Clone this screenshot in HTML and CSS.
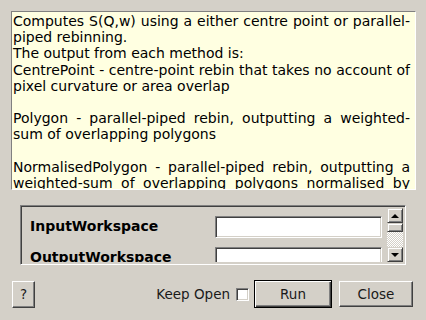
FILE: index.html
```html
<!DOCTYPE html>
<html lang="en">
<head>
    <meta charset="UTF-8">
    <title>Algorithm Dialog</title>
    <link rel="stylesheet" href="styles.css">
</head>
<body>
    <div class="dialog">
        <div class="help-box">
            <p>Computes S(Q,w) using a either centre point or parallel-piped rebinning.<br>The output from each method is:<br>CentrePoint - centre-point rebin that takes no account of pixel curvature or area overlap<br><br>Polygon - parallel-piped rebin, outputting a weighted-sum of overlapping polygons<br><br>NormalisedPolygon - parallel-piped rebin, outputting a weighted-sum of overlapping polygons normalised by their fractional area</p>
        </div>

        <div class="props-frame">
            <div class="props">
                <label class="prop-label">InputWorkspace</label>
                <span class="field"></span>
                <label class="prop-label">OutputWorkspace</label>
                <span class="field"></span>
            </div>
            <div class="scrollbar">
                <span class="sb-btn"><span class="arrow-up"></span></span>
                <span class="sb-thumb"></span>
                <span class="sb-track"></span>
                <span class="sb-btn"><span class="arrow-down"></span></span>
            </div>
        </div>

        <div class="button-row">
            <button class="btn btn-help">?</button>
            <div class="spacer"></div>
            <label class="keep-open">Keep Open <span class="checkbox"></span></label>
            <button class="btn btn-default">Run</button>
            <button class="btn btn-close">Close</button>
        </div>
    </div>
</body>
</html>
```

FILE: styles.css
```css
* {
    margin: 0;
    padding: 0;
    box-sizing: border-box;
    font-family: 'DejaVu Sans', Verdana, sans-serif;
}

body {
    background-color: #d4d0c8;
    color: #000;
    width: 426px;
    height: 320px;
    overflow: hidden;
}

.dialog {
    display: flex;
    flex-direction: column;
    padding: 11px 0 0 11px;
}

/* Help text browser */
.help-box {
    width: 405px;
    height: 179px;
    background-color: #ffffe1;
    border: 1px solid;
    border-color: #808080 #fff #fff #808080;
    padding: 1px 5px 0 1px;
    overflow: hidden;
}

.help-box p {
    font-size: 14px;
    line-height: 16.2px;
    text-align: justify;
}

/* Property panel */
.props-frame {
    display: flex;
    width: 386px;
    height: 60px;
    margin: 15px 0 0 9px;
    border: 1px solid;
    border-color: #808080 #fff #fff #808080;
    box-shadow: inset 1px 1px #404040, inset -1px -1px #d4d0c8;
    padding: 2px;
}

.props {
    flex: 1;
    display: grid;
    grid-template-columns: 1fr 167px;
    column-gap: 5px;
    row-gap: 9px;
    align-items: center;
    padding: 8px 5px 0 7px;
    overflow: hidden;
}

.prop-label {
    font-size: 14px;
    font-weight: bold;
    line-height: 16px;
    margin-top: -2px;
}

.field {
    display: block;
    height: 22px;
    background: #fff;
    border: 1px solid;
    border-color: #808080 #fff #fff #808080;
    box-shadow: inset 1px 1px #404040, inset -1px -1px #d4d0c8;
}

.scrollbar {
    display: flex;
    flex-direction: column;
    width: 16px;
}

.sb-btn,
.sb-thumb {
    display: flex;
    align-items: center;
    justify-content: center;
    background: #d4d0c8;
    border: 1px solid;
    border-color: #d4d0c8 #404040 #404040 #d4d0c8;
    box-shadow: inset 1px 1px #fff, inset -1px -1px #808080;
}

.sb-btn {
    height: 15px;
}

.sb-thumb {
    height: 9px;
}

.sb-track {
    flex: 1;
    background: repeating-conic-gradient(#fff 0 25%, #d4d0c8 0 50%) 0 0 / 2px 2px;
}

.arrow-up,
.arrow-down {
    width: 0;
    height: 0;
    border-left: 4px solid transparent;
    border-right: 4px solid transparent;
}

.arrow-up {
    border-bottom: 4px solid #000;
}

.arrow-down {
    border-top: 4px solid #000;
}

/* Bottom buttons */
.button-row {
    display: flex;
    align-items: center;
    height: 28px;
    margin-top: 15px;
    padding-right: 13px;
    margin-left: 1px;
}

.spacer {
    flex: 1;
}

.btn {
    font-size: 13.5px;
    color: #1a1a1a;
    background: #d4d0c8;
    border: 1px solid;
    border-color: #fff #404040 #404040 #fff;
    box-shadow: inset -1px -1px #808080;
    height: 26px;
}

.btn-help {
    width: 23px;
    height: 27px;
}

.btn-close {
    width: 74px;
    margin-left: 7px;
}

.btn-default {
    width: 78px;
    height: 28px;
    border: 1px solid #000;
    box-shadow: inset 1px 1px #fff, inset -1px -1px #404040, inset -2px -2px #808080;
}

.keep-open {
    display: flex;
    align-items: center;
    font-size: 13.5px;
    color: #1a1a1a;
    margin-right: 5px;
}

.checkbox {
    width: 13px;
    height: 13px;
    margin-left: 6px;
    background: #fff;
    border: 1px solid;
    border-color: #808080 #fff #fff #808080;
    box-shadow: inset 1px 1px #404040, inset -1px -1px #d4d0c8;
}
```
